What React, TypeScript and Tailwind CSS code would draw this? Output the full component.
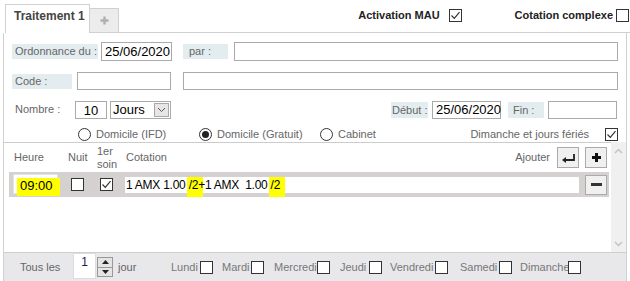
import React from "react";

function Check({ checked = false }: { checked?: boolean }) {
  return (
    <div className="w-[13px] h-[13px] border border-[#333] bg-white shrink-0 flex items-center justify-center">
      {checked && (
        <svg width="11" height="11" viewBox="0 0 11 11">
          <path d="M1.5 5.5 L4.3 8.3 L9.5 2.2" fill="none" stroke="#333" strokeWidth="1.2" />
        </svg>
      )}
    </div>
  );
}

function Radio({ on = false }: { on?: boolean }) {
  return (
    <div className="w-[13px] h-[13px] rounded-full border border-[#333] bg-white shrink-0 flex items-center justify-center">
      {on && <div className="w-[7px] h-[7px] rounded-full bg-[#222]" />}
    </div>
  );
}

function Hl({ children }: { children: React.ReactNode }) {
  return (
    <span className="relative inline-block">
      <span className="absolute left-[-2px] right-[-5px] top-[0px] bottom-[-4px] bg-[#ffff00]" />
      <span className="relative">{children}</span>
    </span>
  );
}

export default function App() {
  return (
    <div className="w-[630px] h-[281px] overflow-hidden bg-white font-['Liberation_Sans',Arial,sans-serif] text-[11px] text-[#666] whitespace-nowrap">
      {/* top tabs row */}
      <div className="flex items-end h-[33px]">
        <div className="w-[5px] shrink-0" />
        <div className="w-[85px] h-[29px] shrink-0 border border-b-0 border-[#d0d0d0] bg-white pl-[8px] pt-[4px] text-[12px] font-bold text-[#444] leading-[14px]">
          Traitement 1
        </div>
        <div className="w-[29px] h-[25px] shrink-0 border border-l-0 border-[#d0d0d0] bg-[#ececec] flex items-center justify-center">
          <svg width="9" height="9" viewBox="0 0 9 9">
            <path d="M4.5 0.5 V8.5 M0.5 4.5 H8.5" stroke="#b0b0b0" strokeWidth="2.4" />
          </svg>
        </div>
        <div className="flex-1 h-[33px] border-b border-[#d0d0d0] flex items-center justify-end pb-[1px]">
          <span className="text-[11px] font-bold text-[#222]">Activation MAU</span>
          <div className="ml-[9px]">
            <Check checked />
          </div>
          <span className="ml-[53px] text-[11px] font-bold text-[#222]">Cotation complexe</span>
          <div className="ml-[3px] mr-[1px]">
            <Check />
          </div>
        </div>
      </div>

      {/* panel */}
      <div className="ml-[3px] w-[624px] h-[248px] border-l border-r border-[#d0d0d0] flex flex-col">
        {/* row 1 */}
        <div className="flex items-center pl-[8px] mt-[9px] h-[19px]">
          <div className="w-[86px] h-[15px] bg-[#e3edf0] pl-[3px] leading-[15px]">Ordonnance du :</div>
          <div className="ml-[3px] w-[71px] h-[19px] border border-[#aaa] pl-[3px] text-[13px] text-black leading-[17px]">25/06/2020</div>
          <div className="ml-[11px] w-[45px] h-[15px] bg-[#e3edf0] pl-[6px] leading-[15px]">par :</div>
          <div className="ml-[6px] w-[384px] h-[19px] border border-[#aaa]" />
        </div>

        {/* row 2 */}
        <div className="flex items-center pl-[8px] mt-[11px] h-[18px]">
          <div className="w-[60px] h-[15px] bg-[#e3edf0] pl-[3px] leading-[15px]">Code :</div>
          <div className="ml-[5px] w-[94px] h-[18px] border border-[#aaa]" />
          <div className="ml-[12px] w-[435px] h-[18px] border border-[#aaa]" />
        </div>

        {/* row 3 */}
        <div className="flex items-center pl-[8px] mt-[11px] h-[18px]">
          <div className="w-[60px] pl-[3px] leading-[15px] pb-[2px]">Nombre :</div>
          <div className="ml-[3px] w-[32px] h-[18px] border border-[#aaa] text-center text-[13px] text-black leading-[18px]">10</div>
          <div className="ml-[3px] w-[61px] h-[18px] border border-[#aaa] flex items-center pl-[2px] text-[13px] text-black leading-[16px]">
            <span className="flex-1">Jours</span>
            <div className="w-[15px] h-[14px] mr-[1px] border border-[#a8a8a8] bg-[#e6e6e6] flex items-center justify-center">
              <svg width="9" height="6" viewBox="0 0 9 6">
                <path d="M1 1 L4.5 4.5 L8 1" fill="none" stroke="#555" strokeWidth="1" />
              </svg>
            </div>
          </div>
          <div className="ml-[220px] w-[37px] h-[16px] bg-[#e3edf0] pl-[1px] leading-[16px] overflow-hidden">Début :</div>
          <div className="ml-[4px] w-[69px] h-[18px] border border-[#aaa] pl-[3px] text-[13px] text-black leading-[16px]">25/06/2020</div>
          <div className="ml-[7px] w-[36px] h-[16px] bg-[#e3edf0] pl-[5px] leading-[16px]">Fin :</div>
          <div className="ml-[4px] w-[69px] h-[18px] border border-[#aaa]" />
        </div>

        {/* row 4 radios */}
        <div className="flex items-center mt-[8px] h-[14px] pl-[74px] pr-[8px]">
          <div className="w-[121px] flex items-center">
            <Radio />
            <span className="ml-[5px] text-[11px]">Domicile (IFD)</span>
          </div>
          <div className="w-[121px] flex items-center">
            <Radio on />
            <span className="ml-[5px]">Domicile (Gratuit)</span>
          </div>
          <div className="flex items-center">
            <Radio />
            <span className="ml-[5px]">Cabinet</span>
          </div>
          <span className="ml-auto">Dimanche et jours fériés</span>
          <div className="ml-[16px]">
            <Check checked />
          </div>
        </div>

        {/* list area */}
        <div className="flex mt-[1px] h-[110px]">
          <div className="flex-1 border-t border-[#ccc] flex flex-col">
            {/* header */}
            <div className="flex items-center h-[29px] pl-[10px] pr-[4px]">
              <div className="w-[54px]">Heure</div>
              <div className="w-[29px]">Nuit</div>
              <div className="w-[29px] leading-[13px] pt-[1px]">
                1er
                <br />
                soin
              </div>
              <div>Cotation</div>
              <div className="ml-auto">Ajouter</div>
              <div className="ml-[7px] w-[22px] h-[21px] border border-[#aaa] bg-[#f0f0f0] flex items-center justify-center">
                <svg width="15" height="10" viewBox="0 0 15 10">
                  <path d="M13 1 V7 H4" fill="none" stroke="#222" strokeWidth="1.8" />
                  <path d="M1 7 L5 4 L5 10 Z" fill="#222" />
                </svg>
              </div>
              <div className="ml-[6px] w-[22px] h-[21px] border border-[#aaa] bg-[#f0f0f0] flex items-center justify-center">
                <svg width="9" height="9" viewBox="0 0 9 9">
                  <path d="M4.5 0 V9 M0 4.5 H9" stroke="#111" strokeWidth="3" />
                </svg>
              </div>
            </div>
            {/* data row */}
            <div className="ml-[5px] mr-[2px] h-[25px] bg-[#d5d1d0] flex items-center">
              <div className="relative ml-[4px] w-[45px] h-[20px] mb-[1px] bg-white border border-[#e2e2e2] text-[13px] text-black">
                <span className="absolute left-[3px] top-[3px] w-[43px] h-[18px] bg-[#ffff00]" />
                <span className="relative pl-[6px] leading-[20px] top-[1px]">09:00</span>
              </div>
              <div className="ml-[13px]">
                <Check />
              </div>
              <div className="ml-[16px]">
                <Check checked />
              </div>
              <div className="ml-[12px] w-[454px] h-[16px] bg-white text-[12px] tracking-[-0.25px] text-black leading-[16px] whitespace-pre pl-[1px]">
                <span className="relative">{"1 AMX 1.00 "}</span>
                <Hl>/2</Hl>
                <span className="relative">{"+1 AMX  1.00 "}</span>
                <Hl>/2</Hl>
              </div>
              <div className="ml-[6px] w-[22px] h-[20px] border border-[#aaa] bg-[#f0f0f0] flex items-center justify-center">
                <svg width="11" height="3" viewBox="0 0 11 3">
                  <rect x="0" y="0" width="11" height="3" fill="#333" />
                </svg>
              </div>
            </div>
          </div>
          {/* scrollbar */}
          <div className="w-[15px] bg-[#f0f0f0] flex flex-col items-center justify-between pt-[6px] pb-[5px]">
            <svg width="9" height="6" viewBox="0 0 9 6">
              <path d="M1 5 L4.5 1.5 L8 5" fill="none" stroke="#c4c4c4" strokeWidth="1.5" />
            </svg>
            <svg width="9" height="6" viewBox="0 0 9 6">
              <path d="M1 1 L4.5 4.5 L8 1" fill="none" stroke="#c4c4c4" strokeWidth="1.5" />
            </svg>
          </div>
        </div>

        {/* bottom bar */}
        <div className="flex-1 border-t border-[#cfcfcf] bg-[#e8e8eb] flex items-center pl-[16px] text-[#777]">
          <div className="w-[53px] text-[#666]">Tous les</div>
          <div className="self-start w-[23px] h-[26px] bg-white border border-[#ddd] text-[12px] text-[#1a1a5a] text-center leading-[14px] pt-[1px]">1</div>
          <div className="ml-[1px] w-[16px] h-[20px] border border-[#999] bg-[#e4e4e4] flex flex-col">
            <div className="flex-1 flex items-center justify-center border-b border-[#999]">
              <svg width="7" height="4" viewBox="0 0 7 4">
                <path d="M0 4 L3.5 0 L7 4 Z" fill="#222" />
              </svg>
            </div>
            <div className="flex-1 flex items-center justify-center">
              <svg width="7" height="4" viewBox="0 0 7 4">
                <path d="M0 0 L3.5 4 L7 0 Z" fill="#222" />
              </svg>
            </div>
          </div>
          <div className="ml-[5px] w-[53px] text-[#666]">jour</div>
          <div className="w-[29px]">Lundi</div>
          <Check />
          <div className="ml-[9px] w-[29px]">Mardi</div>
          <Check />
          <div className="ml-[10px] w-[43px]">Mercredi</div>
          <Check />
          <div className="ml-[10px] w-[29px]">Jeudi</div>
          <Check />
          <div className="ml-[8px] w-[45px]">Vendredi</div>
          <Check />
          <div className="ml-[12px] w-[39px]">Samedi</div>
          <Check />
          <div className="ml-[8px] w-[48px]">Dimanche</div>
          <Check />
        </div>
      </div>
    </div>
  );
}
